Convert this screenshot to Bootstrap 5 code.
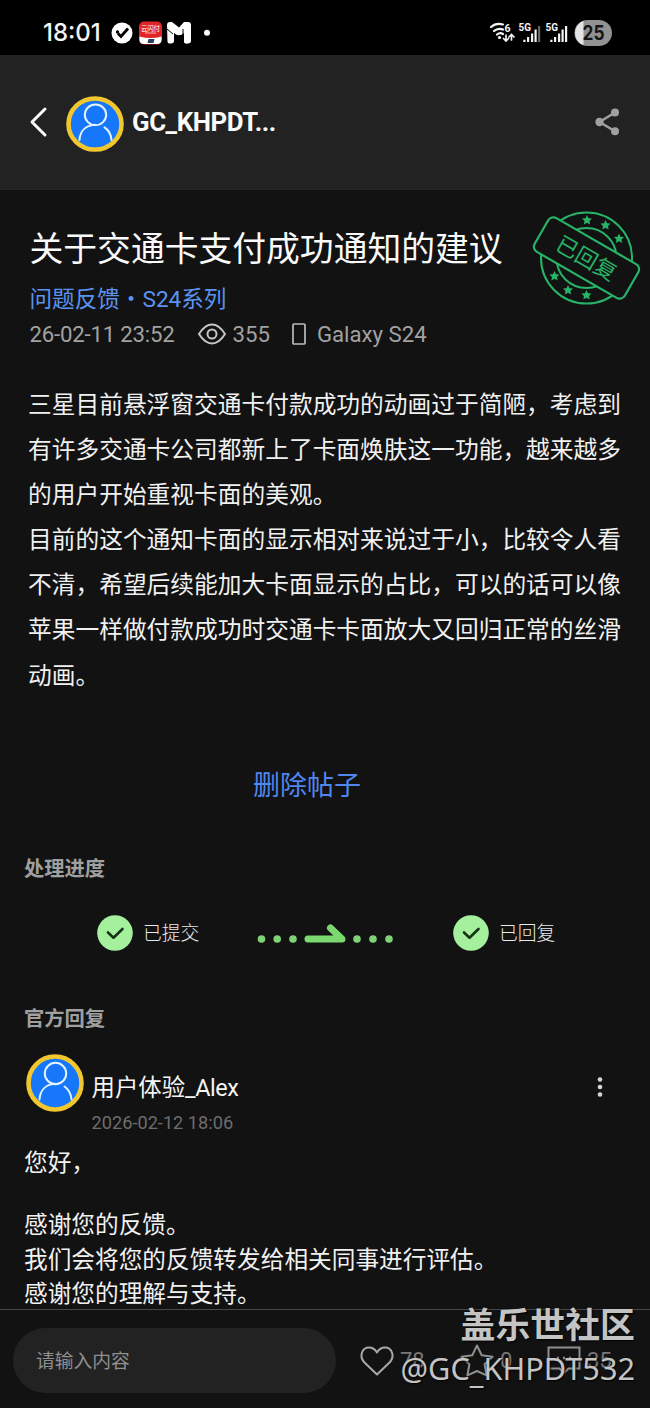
<!DOCTYPE html>
<html lang="zh-CN">
<head>
<meta charset="utf-8">
<meta name="viewport" content="width=device-width, initial-scale=1">
<title>关于交通卡支付成功通知的建议</title>
<link href="https://cdn.jsdelivr.net/npm/bootstrap@5.3.0/dist/css/bootstrap.min.css" rel="stylesheet">
<style>
body{background:#121212;color:#f1f1f1;font-family:Roboto,"Noto Sans CJK SC",sans-serif;height:1408px;overflow:hidden}
svg{display:block;flex:none;overflow:visible}
.statusbar{height:55px;background:#000;padding:11px 38px 0 43px}
.clock{font:500 24px/46px Inter,sans-serif;width:68px;letter-spacing:0;color:#f5f5f5}
.topbar{height:135px;background:#222;padding:0 30px;border-bottom:1px solid #262626}
.topname{font-size:25.8px;font-weight:700;color:#fafafa;letter-spacing:-.42px;margin-left:8px}
.post{padding:38px 28.5px 0;height:642px}
.post h1{font-size:33.8px;line-height:44px;font-weight:400;margin:0 0 10px;padding-left:1px;color:#fafafa;white-space:nowrap}
.category{font-size:22.6px;line-height:36px;height:34px;color:#5b94f0;text-decoration:none;padding-left:1px}
.meta{font-size:22.2px;line-height:36px;height:36px;color:#a2a2a2;padding-left:1px}
.posted{letter-spacing:-.2px;width:145px;white-space:nowrap}
.article{font-size:23.72px;line-height:45.17px;margin:30.5px -5px 0 -.5px;white-space:nowrap}
.stamp{position:absolute;right:9px;top:20px}
.removal{font-size:27px;line-height:40px;color:#4f86f0;margin:67px 19px 0 -17px}
.section-title{font-size:20.3px;line-height:30px;font-weight:700;color:#a0a0a0;margin:0;padding-left:24px}
.steps{height:40px;margin-top:29px;padding-left:97px;font-size:18.8px;font-weight:300;color:#e9e9e9}
.step-label{width:57px;margin-left:10px;white-space:nowrap;padding-top:2px}
.reply{padding:0 24px}
.author{font-size:23.4px;line-height:34px;color:#f4f4f4}
.author span{letter-spacing:-.45px}
.date{font-size:18.2px;line-height:24px;color:#6c6c6c;margin-top:6px}
.answer{font-size:23.68px;line-height:34.3px;white-space:nowrap}
.footerbar{height:99px;border-top:1px solid #484848;background:#121212;padding:3px 0 0 13px;color:#777;font-size:22px}
.entry{width:323px;height:65px;border-radius:33px;background:#222;border:0;padding:2px 23px 0;font-size:18.8px;color:#999}
.entry::placeholder{color:#8f8f8f;opacity:1}
.counts{margin-left:24px}
.watermark{right:15px;bottom:17px;color:#c4c4c4;text-align:right;text-shadow:1px 1px 2px #000}
.wm-site{font:700 34.9px/46px "Noto Sans CJK SC",sans-serif;height:45px}
.wm-user{font:400 30.7px/46px "Noto Sans","Open Sans",sans-serif;height:46px;white-space:nowrap}
.wm-user span{line-height:1;vertical-align:-3px}
</style>
</head>
<body class="d-flex flex-column position-relative">
<svg width="0" height="0" class="position-absolute" aria-hidden="true">
  <defs>
    <symbol id="avatar" viewBox="0 0 58 58" preserveAspectRatio="none">
      <circle cx="29" cy="29" r="26.5" fill="#1677fb" stroke="#f1c62f" stroke-width="4.600"/>
      <g fill="none" stroke="#e4f3ff" stroke-width="2" stroke-linecap="round"><circle cx="29.5" cy="19.5" r="10.7"/><path d="M13.5 45.5C14 36 20 30.5 29 29.8M38.5 32.5C43 35.500 45 40 45.500 45.500"/></g>
    </symbol>
    <symbol id="done" viewBox="0 0 36 36"><circle cx="18" cy="18" r="17.800" fill="#a4f09d"/><path d="M11 17.500l5.500 5.200 9-8.700" fill="none" stroke="#163214" stroke-width="2.600" stroke-linecap="round" stroke-linejoin="round"/></symbol>
    <path id="star" d="M0-5l1.500 3.200 3.500.4-2.500 2.400.6 3.500L0 2.800l-3.100 1.700.6-3.500-2.500-2.400 3.500-.4z"/>
  </defs>
</svg>

<div class="statusbar d-flex justify-content-between">
  <div class="d-flex align-items-center">
    <span class="clock">18:01</span>
    <svg width="102" height="24" viewBox="0 0 102 24">
      <circle cx="11" cy="12" r="10.500" fill="#fff"/><path d="M7 12.500l3 3 7-8" fill="none" stroke="#000" stroke-width="2.800"/><circle cx="6.500" cy="11" r="1.700" fill="#000"/>
      <rect x="28" y=".5" width="23" height="23" rx="5" fill="#e02428"/><path d="M28.500 15.500q11 3 22 0v3q0 4.500-4.500 4.500H33q-4.500 0-4.500-4.500z" fill="#fff"/><path d="M37.500 18h6l-1 4h-6z" fill="#254060"/>
      <text x="30" y="9.500" fill="#fff" font-family="Noto Sans CJK SC" font-size="6.500" font-weight="400" textLength="19">云闪付</text><path d="M34 12h11" stroke="#ffb3b3" stroke-width="1"/>
      <path d="M56 4q0-3 3-3h2l7 5.500L73 1h4q3 0 3 3v16q0 2-3 2.500t-4-1V12q-5 4.500-10 0v8q0 2-3 2.500t-3.500-1.500z" fill="#fff"/><path d="M56 8l6 5M72 8v5" stroke="#000" stroke-width="1"/>
      <circle cx="96" cy="11.800" r="3" fill="#fff"/>
    </svg>
  </div>
  <svg width="122" height="26" viewBox="0 0 122 26" style="margin-top:9px">
    <g fill="none" stroke="#f3f3f3" stroke-width="2.200" stroke-linecap="round"><path d="M1 7Q6 2.500 13 4.500M4 11Q8 7.500 13 9.500M7 14.500Q10 12 13 14"/><path d="M16 15v5.500m-2.500-2 2.500 2.500 2.500-2.500M21.500 20v-5m-2.500 2 2.500-2.500L24 17" stroke-width="1.700"/></g>
    <circle cx="9.500" cy="17.500" r="1.600" fill="#f3f3f3"/>
    <g fill="#f3f3f3" font-family="Roboto" font-weight="700" font-size="10.500"><text x="14.500" y="11.500">6</text><text x="28.500" y="11" textLength="12.500" lengthAdjust="spacingAndGlyphs">5G</text><text x="55.500" y="11" textLength="12.500" lengthAdjust="spacingAndGlyphs">5G</text></g>
    <g fill="#f3f3f3"><path d="M33.300 19.800h2.200V22h-2.200zM37 17h2.200v5H37zM41 13.500h2.200V22H41zM44.500 9.500h2.200V22h-2.200zM60.300 19.800h2.200V22h-2.200zM64 17h2.200v5H64zM68 13.500h2.200V22H68zM71.500 9.500h2.200V22h-2.200zM75 6h2.200v16H75z"/><path d="M48 6h2.200v16H48z" fill="#666"/></g>
    <rect x="84.500" y="0" width="37.500" height="26" rx="13" fill="#929292"/><path d="M93.500.8V25.200A13 13 0 0 1 93.500.8z" fill="#e4e4e4"/>
    <text x="92.500" y="20.300" fill="#151515" font-family="Inter" font-weight="700" font-size="19.500" textLength="22" lengthAdjust="spacingAndGlyphs">25</text>
  </svg>
</div>

<header class="topbar d-flex align-items-center">
  <svg width="16" height="30" viewBox="0 0 16 30"><path d="M15 2L2 15l13 13" fill="none" stroke="#fafafa" stroke-width="3" stroke-linecap="round" stroke-linejoin="round"/></svg>
  <svg width="58" height="56" style="margin-left:20px;margin-top:3px"><use href="#avatar" width="58" height="56"/></svg>
  <span class="topname">GC_KHPDT...</span>
  <svg class="ms-auto" width="25" height="28" viewBox="0 0 25 28"><g fill="#a0a0a0"><circle cx="4.500" cy="14" r="4.200"/><circle cx="20" cy="4.500" r="4"/><circle cx="20" cy="23.300" r="4"/></g><path d="M20 4.500L4.500 14 20 23.300" fill="none" stroke="#a0a0a0" stroke-width="2.500"/></svg>
</header>

<main>
  <article class="post position-relative">
    <h1>关于交通卡支付成功通知的建议</h1>
    <a class="category d-block" href="#">问题反馈・S24系列</a>
    <div class="meta d-flex align-items-center">
      <span class="posted">26-02-11 23:52</span>
      <svg width="28" height="22" viewBox="0 0 28 22" style="margin-left:23px"><path d="M1 11Q7 1.500 14 1.500T27 11Q21 20.500 14 20.500T1 11z" fill="none" stroke="#c5c5c5" stroke-width="2"/><circle cx="14" cy="11" r="4.500" fill="none" stroke="#c5c5c5" stroke-width="2"/></svg>
      <span style="margin-left:7px">355</span>
      <svg width="14" height="22" viewBox="0 0 14 22" style="margin-left:22px"><rect x="1" y="1" width="12" height="20" rx="1" fill="none" stroke="#bcbcbc" stroke-width="1.700"/></svg>
      <span style="margin-left:11px">Galaxy S24</span>
    </div>
    <div class="article">三星目前悬浮窗交通卡付款成功的动画过于简陋，考虑到<br>有许多交通卡公司都新上了卡面焕肤这一功能，越来越多<br>的用户开始重视卡面的美观。<br>目前的这个通知卡面的显示相对来说过于小，比较令人看<br>不清，希望后续能加大卡面显示的占比，可以的话可以像<br>苹果一样做付款成功时交通卡卡面放大又回归正常的丝滑<br>动画。</div>
    <div class="removal text-center">删除帖子</div>
    <svg class="stamp" width="110" height="96" viewBox="0 0 110 96">
      <g fill="none" stroke="#27b468" stroke-width="2"><circle cx="55.500" cy="48" r="45.500"/><circle cx="55.500" cy="48" r="30"/></g>
      <g fill="#27b468"><use href="#star" x="56" y="10"/><use href="#star" x="74.500" y="15"/><use href="#star" x="88" y="28.500"/><use href="#star" x="23.500" y="66"/><use href="#star" x="37" y="80"/><use href="#star" x="55.500" y="85"/></g>
      <g transform="translate(55.500 48) rotate(30)"><rect x="-52" y="-19.500" width="104" height="39" rx="6" fill="#121212" stroke="#27b468" stroke-width="2.200"/><text y="8" text-anchor="middle" fill="#27b468" font-family="Noto Sans CJK SC" font-size="22" font-weight="400">已回复</text></g>
    </svg>
  </article>

  <section style="padding-top:22px">
    <h2 class="section-title">处理进度</h2>
    <div class="steps d-flex align-items-center">
      <svg width="36" height="36"><use href="#done" width="36" height="36"/></svg><span class="step-label">已提交</span>
      <svg width="137" height="20" viewBox="0 0 137 20" style="margin-left:57px;margin-top:3px"><g fill="#7fd276"><circle cx="4.500" cy="14" r="3.800"/><circle cx="20.200" cy="14" r="3.800"/><circle cx="36" cy="14" r="3.800"/><circle cx="100" cy="14" r="3.800"/><circle cx="116" cy="14" r="3.800"/><circle cx="132" cy="14" r="3.800"/></g><path d="M51 14h34L73.500 3" fill="none" stroke="#7bd970" stroke-width="7" stroke-linecap="round" stroke-linejoin="round"/></svg>
      <svg width="36" height="36" style="margin-left:59px"><use href="#done" width="36" height="36"/></svg><span class="step-label">已回复</span>
    </div>
  </section>

  <section style="padding-top:51px">
    <h2 class="section-title">官方回复</h2>
    <div class="reply">
      <div class="d-flex" style="margin-top:20px;padding-left:2px">
        <svg width="58" height="58"><use href="#avatar" width="58" height="58"/></svg>
        <div style="margin:17px 0 0 7.500px"><div class="author">用户体验<span>_Alex</span></div><div class="date">2026-02-12 18:06</div></div>
        <svg class="ms-auto" width="6" height="20" viewBox="0 0 6 20" style="margin-top:23px;margin-right:23px" fill="#d6d6d6"><circle cx="3" cy="2.500" r="2.300"/><circle cx="3" cy="10" r="2.300"/><circle cx="3" cy="17.500" r="2.300"/></svg>
      </div>
      <div class="answer" style="margin-top:11px">您好，</div>
      <div class="answer" style="margin-top:28px">感谢您的反馈。<br>我们会将您的反馈转发给相关同事进行评估。<br>感谢您的理解与支持。</div>
    </div>
  </section>
</main>

<footer class="footerbar d-flex align-items-center position-absolute bottom-0 start-0 end-0">
  <input class="entry" type="text" placeholder="请输入内容">
  <div class="counts d-flex align-items-center">
    <svg width="34" height="30" viewBox="0 0 34 30" fill="none" stroke="#a8a8a8" stroke-width="2"><path d="M17 28.500L4 16C-1 10 2 1.500 9 1.500c4 0 6.500 2.500 8 5 1.500-2.500 4-5 8-5 7 0 10 8.500 5 14.500z" stroke-linejoin="round"/></svg>
    <span style="width:32px;margin-left:6px">78</span>
    <svg width="34" height="34" viewBox="0 0 34 34" style="margin-left:28px" fill="none" stroke="#8e8e8e" stroke-width="2"><path d="M17 1.500l4.700 9.800 10.800 1.500-7.900 7.500 2 11L17 27l-9.600 4.300 2-11-7.900-7.500 10.800-1.500z" stroke-linejoin="round"/></svg>
    <span style="width:18px;margin-left:6px">0</span>
    <svg width="34" height="30" viewBox="0 0 34 30" style="margin-left:29px" fill="none" stroke="#8e8e8e" stroke-width="2"><path d="M1.500 1.500h31v21h-11L17 27l-4.500-4.500h-11z"/><path d="M10 12h2m4 0h2m4 0h2" stroke-width="2.500"/></svg>
    <span style="margin-left:6px">35</span>
  </div>
</footer>
<div class="watermark position-absolute"><div class="wm-site">盖乐世社区</div><div class="wm-user">@GC<span>_</span>KHPDT532</div></div>
<script src="https://cdn.jsdelivr.net/npm/bootstrap@5.3.0/dist/js/bootstrap.bundle.min.js"></script>
</body>
</html>
